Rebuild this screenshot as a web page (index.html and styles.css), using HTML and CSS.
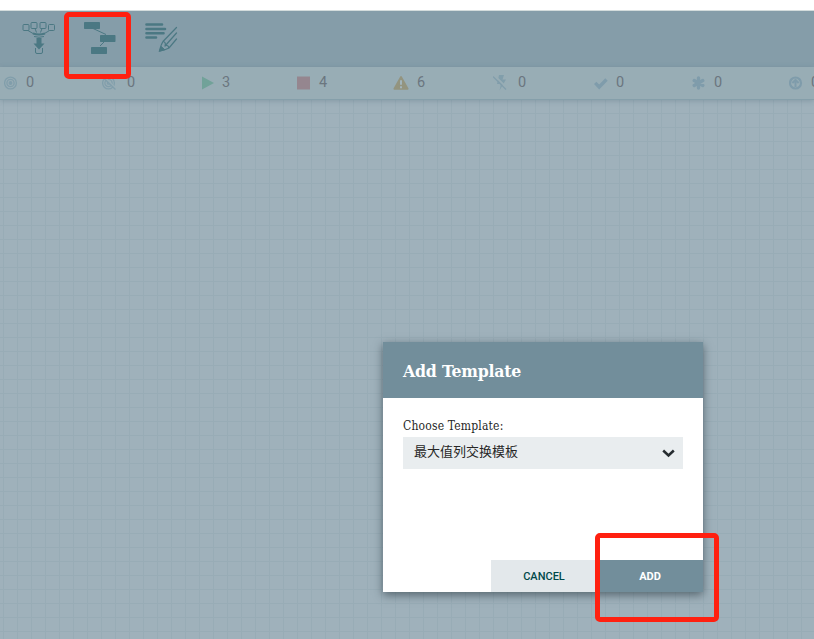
FILE: index.html
```html
<!DOCTYPE html>
<html lang="en">
<head>
<meta charset="utf-8">
<title>Add Template</title>
<link rel="stylesheet" href="styles.css">
</head>
<body>
<div class="app">
  <header class="toolbar">
    <svg class="tool funnel" width="34" height="34" viewBox="0 0 34 34" fill="none" stroke="#4b7883">
      <g stroke-width="1"><rect x="1" y="4.500" width="6" height="6" rx="1"/><rect x="9" y="2.500" width="6" height="6" rx="1"/><rect x="18" y="2.500" width="6" height="6" rx="1"/><rect x="26.500" y="4.500" width="6" height="6" rx="1"/>
      <path d="M6 10.500l5 3M13 8.500l1.500 4M20 8.500l-1.500 4M27.500 10.500l-5 3M13.500 28v4q0 1.500 1.500 1.500h4q1.500 0 1.500-1.500v-4"/></g>
      <path d="M11 13.500q6 2 12 0" stroke-width="2"/><path d="M12 16.500q5 1.500 10 0" stroke-width="1"/>
      <path d="M14.500 18h5v5.500h3L17 29.500l-5.500-6h3z" fill="#4b7883" stroke="none"/>
    </svg>
    <svg class="tool template" width="34" height="34" viewBox="0 0 34 34" fill="#4b7883">
      <path d="M9 8l14 6.500M23 20l-6 6" stroke="#4b7883"/>
      <rect x="1" y="2" width="16" height="7" rx=".7"/><rect x="17" y="15" width="15.500" height="7" rx=".7"/><rect x="8" y="27" width="16" height="7" rx=".7"/>
    </svg>
    <svg class="tool label" width="34" height="34" viewBox="0 0 34 34" fill="none" stroke="#4b7883" stroke-linecap="round">
      <path d="M2.500 4.500H18M2.500 9H21M2.500 13.300H19.500M2.500 17.500H12" stroke-width="2.600"/>
      <path d="M32.500 7.500L19 21.500q-2 3-3.500 9.500 6-1 9.500-3l7.500-9M32.500 13L21 26M19 21.500q3 .5 2.200 3.800 3-.5 3.800 2.700" stroke-width="1.200"/>
      <path d="M15.500 31l1.700-4.500 3.300 3z" fill="#4b7883" stroke="#4b7883"/>
    </svg>
  </header>
  <div class="status">
    <div class="stat"><svg class="icon" viewBox="0 0 14 14" fill="none" stroke="#819eab" stroke-width="1.300"><circle cx="6.500" cy="7" r="5.900"/><circle cx="6.500" cy="7" r="3.600"/><circle cx="6.500" cy="7" r="1.300" fill="#819eab"/></svg><span>0</span></div>
    <div class="stat wide"><svg class="icon" viewBox="0 0 14 14" fill="none" stroke="#819eab" stroke-width="1.300"><circle cx="6.500" cy="7" r="5.900"/><circle cx="6.500" cy="7" r="3.600"/><circle cx="6.500" cy="7" r="1.200"/><path d="M1.500 0l12.500 12.500" stroke="#98adb5" stroke-width="1.500"/><path d="M0 .5l13.500 13"/></svg><span>0</span></div>
    <div class="stat narrow"><svg class="icon" viewBox="0 0 14 14" fill="#71a299"><path d="M0 .5L12 7 0 13.500z"/></svg><span>3</span></div>
    <div class="stat"><svg class="icon" viewBox="0 0 14 14" fill="#95868f"><path d="M0 .5h13v13H0z"/></svg><span>4</span></div>
    <div class="stat warning"><svg class="icon big" viewBox="0 0 16 14"><path d="M7.200 .5q.8-1 1.600 0l6.700 12q.3 1-.7 1.200H1.200q-1-.2-.7-1.200z" fill="#93947f"/><path d="M8 4.200v4.500M8 10.200v2" stroke="#a2b4bb" stroke-width="2"/></svg><span>6</span></div>
    <div class="stat wide"><svg class="icon big" viewBox="0 0 16 16"><path d="M6 0h5L9.500 4.500H13L6.500 15.500 8 9H4z" fill="#819eab"/><path d="M1.500 .5l13 13" stroke="#98adb5" stroke-width="1.800"/><path d="M0 1.500l13 13" stroke="#819eab" stroke-width="1.300"/></svg><span>0</span></div>
    <div class="stat"><svg class="icon" viewBox="0 0 14 14" fill="none" stroke="#7f9cab" stroke-width="3.300"><path d="M1.200 6.800l4 4.200 7.300-7.500"/></svg><span>0</span></div>
    <div class="stat"><svg class="icon" viewBox="0 0 14 14" stroke="#7f9cab" stroke-width="3.300" stroke-linecap="round"><path d="M6.500 2v10M2.200 4.500l8.600 5M10.800 4.500l-8.600 5"/></svg><span>0</span></div>
    <div class="stat"><svg class="icon" viewBox="0 0 14 14" fill="none"><circle cx="6.500" cy="7" r="5.500" stroke="#7f9cab" stroke-width="2.200"/><path d="M6.500 11V4M3.400 7l3.100-3.100L9.600 7" stroke="#7f9cab" stroke-width="2"/></svg><span>0</span></div>
  </div>
  <main class="canvas"></main>
</div>
<section class="dialog">
  <h1 class="dialog-title">Add Template</h1>
  <div class="dialog-body">
    <div class="field-label">Choose Template:</div>
    <div class="select"><span>最大值列交换模板</span><svg width="13" height="9" viewBox="0 0 13 9" fill="none" stroke="#262c30" stroke-width="2.500"><path d="M1.200 1.500l5.300 5 5.300-5"/></svg></div>
  </div>
  <div class="actions"><div class="button cancel">CANCEL</div><div class="button add">ADD</div></div>
</section>
<div class="mark mark-tool"></div>
<div class="mark mark-add"></div>
</body>
</html>
```
FILE: styles.css
```css
* { box-sizing: border-box; }
body { margin: 0; overflow: hidden; background: #fff; font-family: Roboto, "Noto Sans CJK SC", sans-serif; }
.app { height: 639px; padding-top: 11px; display: flex; flex-direction: column; }
.toolbar { height: 56px; flex: none; display: flex; gap: 27px; padding: 9px 0 0 22px; background: #859da9; box-shadow: 0 -1px #d3dcdc; }
.tool { flex: none; }
.status { position: relative; height: 33px; flex: none; display: grid; grid-template-columns: 98px 100px 95px 96px 100px 101px 98px 97px 60px; padding-left: 4px; background: #98adb5; border-bottom: 1px solid #859faa; box-shadow: 0 1px 5px rgba(70,100,115,.3); }
.stat { display: flex; align-items: center; gap: 8px; color: #6b767f; font-size: 14.5px; font-weight: 400; line-height: 32px; }
.stat.wide { gap: 11px; }
.stat.narrow { gap: 6px; }
.icon { width: 14px; height: 14px; flex: none; }
.icon.big { width: 16px; height: 16px; }
.stat.wide .big { margin-right: -2px; }
.canvas { flex: 1; background-color: #9fb1bb; background-image: linear-gradient(90deg, #98acb6 1px, transparent 1px), linear-gradient(#98acb6 1px, transparent 1px); background-size: 14px 14px; background-position: 3px 13px; }
.dialog { position: absolute; left: 383px; top: 342px; width: 320px; height: 250px; display: flex; flex-direction: column; background: #fff; box-shadow: 0 3px 9px rgba(35,50,58,.6); }
.dialog-title { margin: 0; height: 56px; padding-left: 20px; background: #728e9b; color: #fff; font: bold 17.5px/58px "Roboto Slab", "DejaVu Serif Condensed", "DejaVu Serif", serif; letter-spacing: -.2px; white-space: nowrap; }
.dialog-body { flex: 1; padding: 18px 20px 0; }
.field-label { height: 21px; color: #262626; font: 12px/20px "Roboto Slab", "DejaVu Serif Condensed", "DejaVu Serif", serif; letter-spacing: .18px; white-space: nowrap; }
.select { height: 32px; padding: 0 8px 0 11px; display: flex; align-items: center; justify-content: space-between; background: #e9edef; color: #262626; font-size: 13px; line-height: 30px; }
.select span { height: 32px; }
.actions { display: flex; justify-content: flex-end; }
.button { width: 106px; height: 32px; text-align: center; font-size: 11px; line-height: 33px; font-weight: 500; }
.cancel { background: #e3e8eb; color: #004849; }
.add { background: #728e9b; color: #fff; font-weight: 700; }
.mark { position: absolute; border: 5px solid #ff2010; border-radius: 5px; }
.mark-tool { left: 64px; top: 12px; width: 67px; height: 67px; }
.mark-add { left: 595px; top: 533px; width: 124px; height: 89px; }
```
